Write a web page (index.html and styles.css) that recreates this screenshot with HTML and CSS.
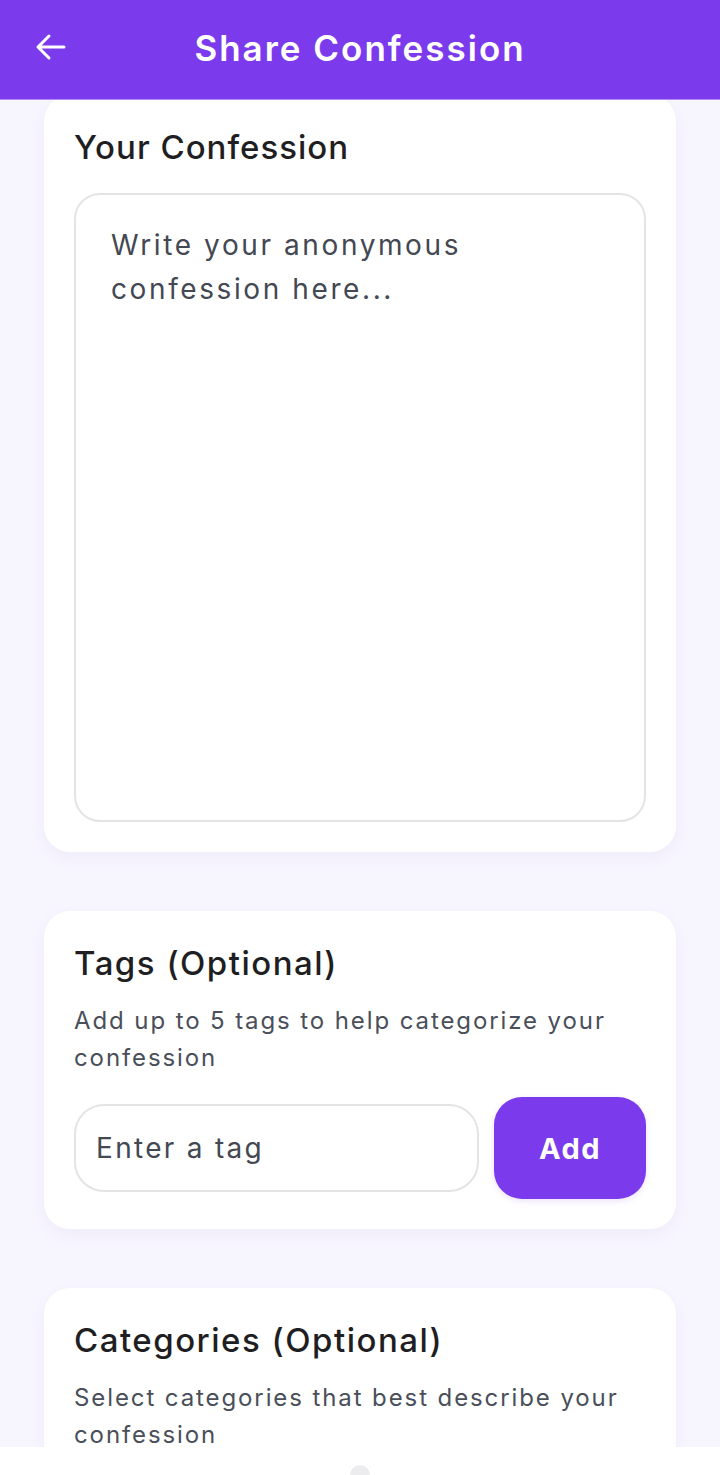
FILE: index.html
```html
<!DOCTYPE html>
<html lang="en">
<head>
<meta charset="utf-8">
<title>Share Confession</title>
<link rel="stylesheet" href="styles.css">
</head>
<body>
<header class="appbar">
  <button class="back" aria-label="Back">
    <svg width="32" height="32" viewBox="0 0 32 32" fill="none" stroke="#fff" stroke-width="3" stroke-linecap="round" stroke-linejoin="round">
      <path d="M29 15H3M14 4L3 15l11 11"/>
    </svg>
  </button>
  <h1 class="title">Share Confession</h1>
</header>
<main class="content">
  <section class="card card-first">
    <h2 class="card-title">Your Confession</h2>
    <div class="textarea"><span class="placeholder">Write your anonymous confession here...</span></div>
  </section>
  <section class="card">
    <h2 class="card-title">Tags (Optional)</h2>
    <p class="card-desc">Add up to 5 tags to help categorize your confession</p>
    <div class="tag-row">
      <div class="tag-input"><span class="placeholder">Enter a tag</span></div>
      <button class="add-btn">Add</button>
    </div>
  </section>
  <section class="card">
    <h2 class="card-title">Categories (Optional)</h2>
    <p class="card-desc">Select categories that best describe your confession</p>
  </section>
</main>
<footer class="bottom-bar"><span class="handle"></span></footer>
</body>
</html>
```
FILE: styles.css
```css
* { box-sizing: border-box; }
html, body { margin: 0; padding: 0; }
body {
  background: #f7f5fe;
  font-family: "Inter", "Noto Sans", sans-serif;
  color: #1f1f23;
  height: 1475px;
  overflow: hidden;
}
.appbar {
  position: relative;
  z-index: 2;
  height: 99px;
  background: #7c3aed;
  box-shadow: 0 1px 0 #b08cf3;
  display: flex;
  align-items: center;
  justify-content: center;
}
.back {
  position: absolute;
  left: 35px;
  top: 32px;
  background: none;
  border: 0;
  padding: 0;
  width: 32px;
  height: 32px;
  display: flex;
}
.title {
  margin: 0;
  color: #fff;
  font-size: 35px;
  font-weight: 600;
  letter-spacing: 2px;
  line-height: 1;
  padding-bottom: 2px;
}
.content {
  padding: 0 44px;
  display: flex;
  flex-direction: column;
  gap: 59px;
}
.card {
  background: #fff;
  border-radius: 26px;
  padding: 30px;
  box-shadow: 0 6px 16px rgba(110, 80, 200, 0.05);
}
.card-first {
  margin-top: -4px;
}
.card-title {
  margin: 0;
  font-size: 33px;
  font-weight: 500;
  line-height: 44px;
  letter-spacing: 1.5px;
  color: #1f1f23;
}
.card-first .card-title {
  margin-bottom: 24px;
  letter-spacing: 1px;
}
.textarea {
  height: 629px;
  border: 2px solid #e4e4e7;
  border-radius: 26px;
  padding: 28px 30px 0 35px;
}
.placeholder {
  color: #434852;
  font-size: 28px;
  line-height: 44px;
  letter-spacing: 2.6px;
}
.textarea .placeholder { display: block; }
.card-desc {
  margin: 17px 0 0;
  font-size: 24px;
  line-height: 37px;
  color: #4a4f5a;
  letter-spacing: 1.9px;
}
.tag-row {
  margin-top: 21px;
  display: flex;
  align-items: center;
  gap: 15px;
}
.tag-input {
  flex: 1;
  height: 88px;
  border: 2px solid #e4e4e7;
  border-radius: 30px;
  padding: 0 20px;
  display: flex;
  align-items: center;
}
.tag-input .placeholder { letter-spacing: 2.3px; }
.add-btn {
  width: 152px;
  height: 102px;
  border: 0;
  border-radius: 28px;
  background: #7c3aed;
  color: #fff;
  font-family: inherit;
  font-size: 29px;
  font-weight: 700;
  letter-spacing: 1.5px;
  box-shadow: 0 2px 6px rgba(124, 58, 237, 0.15);
}
.bottom-bar {
  position: fixed;
  left: 0;
  right: 0;
  bottom: 0;
  height: 28px;
  background: #fff;
  display: flex;
  justify-content: center;
  overflow: hidden;
}
.handle {
  margin-top: 18px;
  width: 20px;
  height: 20px;
  border-radius: 50%;
  background: #ececef;
}
```
